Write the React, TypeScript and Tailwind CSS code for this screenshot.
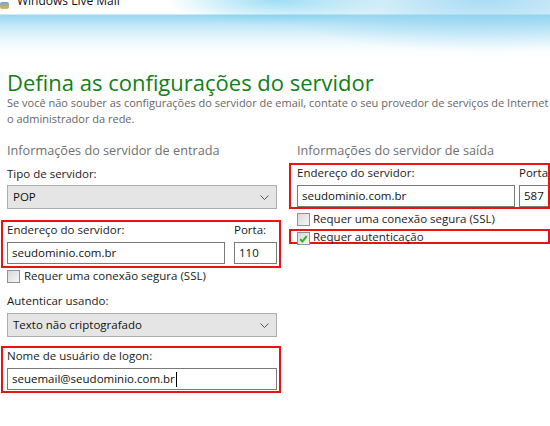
import React from "react";

function Checkbox({ checked = false }: { checked?: boolean }) {
  return (
    <span className="w-[13px] h-[13px] border border-[#8e90a0] bg-[linear-gradient(135deg,#d8d8d8,#f6f6f6)] flex items-center justify-center shrink-0">
      {checked && (
        <svg width="9" height="8" viewBox="0 0 9 8">
          <path d="M1.2 4.2 L3.4 6.4 L7.8 1.2" stroke="#38a838" strokeWidth="2" fill="none" />
        </svg>
      )}
    </span>
  );
}

function Select({ value }: { value: string }) {
  return (
    <div className="h-[24px] border border-[#adadad] bg-[#e5e5e5] flex items-center justify-between pl-[5px] pr-[7px] text-[11.5px] text-[#111]">
      <span>{value}</span>
      <svg width="9" height="5" viewBox="0 0 9 5">
        <path d="M0.5 0.5 L4.5 4.5 L8.5 0.5" stroke="#555" strokeWidth="1" fill="none" />
      </svg>
    </div>
  );
}

function Input({ value, className = "", caret = false }: { value: string; className?: string; caret?: boolean }) {
  return (
    <div className={"h-[22px] border border-[#7a7a7a] bg-white flex items-center pl-[4px] text-[11.5px] text-[#111] overflow-hidden whitespace-nowrap " + className}>
      <span>{value}</span>
      {caret && <span className="w-[1px] h-[15px] bg-black ml-[1px]" />}
    </div>
  );
}

export default function App() {
  return (
    <div className="w-[550px] h-[426px] overflow-hidden bg-white font-['Open_Sans',sans-serif] text-[#1a1a1a]">
      {/* header with sky band */}
      <div className="h-[62px] flex flex-col bg-[image:radial-gradient(ellipse_20%_40%_at_50%_0%,rgba(95,200,238,0.6),transparent),radial-gradient(ellipse_40%_85%_at_88%_0%,rgba(140,208,240,0.75),transparent),linear-gradient(to_bottom,#ffffff_0px,#ffffff_14px,#98d8f2_15px,#c4e9f7_26px,#e6f6fc_38px,#f8fdfe_48px,#ffffff_58px)]">
        <div className="flex items-center gap-[8px] -mt-[8px] h-[18px] shrink-0">
          <span className="w-[9px] h-[7px] mt-[8px] rounded-[2px] bg-[linear-gradient(#6aa7d8,#e9b348)]" />
          <span className="text-[12px] text-[#111]">Windows Live Mail</span>
        </div>
      </div>

      <div className="pl-[7px]">
        <h1 className="text-[22px] leading-[28px] text-[#128019] mt-[6px] whitespace-nowrap">Defina as configurações do servidor</h1>
        <p className="text-[11px] leading-[16px] text-[#666] whitespace-nowrap -mt-[1px]">
          Se você não souber as configurações do servidor de email, contate o seu provedor de serviços de Internet
          <br />o administrador da rede.
        </p>
      </div>

      <div className="flex mt-[15px]">
        {/* left column */}
        <div className="w-[289px] shrink-0">
          <div className="pl-[7px] text-[12.7px] leading-[16px] text-[#707070] whitespace-nowrap">Informações do servidor de entrada</div>
          <div className="pl-[7px] w-[277px] mt-[8px]">
            <div className="text-[11.5px] leading-[16px]">Tipo de servidor:</div>
            <div className="mt-[3px]">
              <Select value="POP" />
            </div>
          </div>
          <div className="ml-[1px] w-[280px] border-2 border-[#ee1111] mt-[11px] pl-[4px] pr-[2px] pb-[2px]">
            <div className="flex justify-between text-[11.5px] leading-[16px]">
              <span>Endereço do servidor:</span>
              <span className="w-[43px]">Porta:</span>
            </div>
            <div className="flex gap-[9px] mt-[4px]">
              <Input value="seudominio.com.br" className="w-[218px]" />
              <Input value="110" className="w-[43px]" />
            </div>
          </div>
          <div className="flex items-center gap-[4px] pl-[7px] mt-[1px] h-[14px] text-[11.5px] leading-[14px]">
            <Checkbox />
            <span>Requer uma conexão segura (SSL)</span>
          </div>
          <div className="pl-[7px] w-[277px] mt-[10px]">
            <div className="text-[11.5px] leading-[16px]">Autenticar usando:</div>
            <div className="mt-[4px]">
              <Select value="Texto não criptografado" />
            </div>
          </div>
          <div className="ml-[1px] w-[280px] border-2 border-[#ee1111] mt-[9px] pl-[4px] pr-[2px] pb-[1px]">
            <div className="text-[11.5px] leading-[16px]">Nome de usuário de logon:</div>
            <Input value="seuemail@seudominio.com.br" caret className="w-[270px] mt-[4px]" />
          </div>
        </div>

        {/* right column */}
        <div className="w-[261px] shrink-0">
          <div className="pl-[8px] text-[12.7px] leading-[16px] text-[#707070] whitespace-nowrap">Informações do servidor de saída</div>
          <div className="w-[261px] border-2 border-[#ee1111] mt-[5px] pl-[6px] overflow-hidden">
            <div className="flex text-[11.5px] leading-[16px] whitespace-nowrap">
              <span className="w-[222px] shrink-0">Endereço do servidor:</span>
              <span>Porta:</span>
            </div>
            <div className="flex gap-[4px] mt-[4px]">
              <Input value="seudominio.com.br" className="w-[218px] shrink-0" />
              <Input value="587" className="w-[31px] shrink-0" />
            </div>
          </div>
          <div className="flex items-center gap-[3px] pl-[8px] mt-[3px] h-[14px] text-[11.5px] leading-[14px]">
            <Checkbox />
            <span>Requer uma conexão segura (SSL)</span>
          </div>
          <div className="w-[261px] h-[15px] border-2 border-[#ee1111] mt-[3px] flex items-start gap-[3px] pl-[6px] text-[11.5px] leading-[13px]">
            <span className="mt-[1px]">
              <Checkbox checked />
            </span>
            <span className="-mt-[1px]">Requer autenticação</span>
          </div>
        </div>
      </div>
    </div>
  );
}
